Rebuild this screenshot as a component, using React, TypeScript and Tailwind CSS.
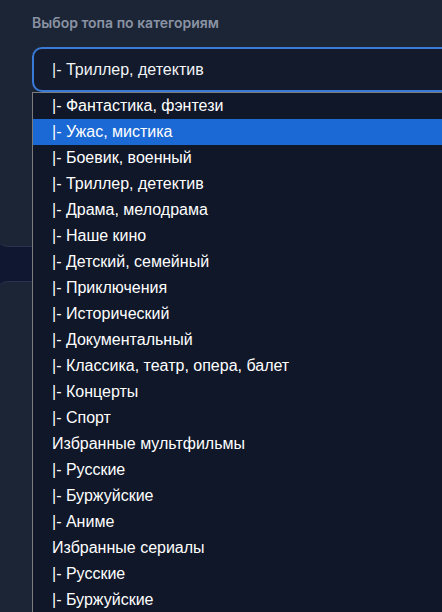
import React from "react";

const items: { label: string; child: boolean }[] = [
  { label: "Фантастика, фэнтези", child: true },
  { label: "Ужас, мистика", child: true },
  { label: "Боевик, военный", child: true },
  { label: "Триллер, детектив", child: true },
  { label: "Драма, мелодрама", child: true },
  { label: "Наше кино", child: true },
  { label: "Детский, семейный", child: true },
  { label: "Приключения", child: true },
  { label: "Исторический", child: true },
  { label: "Документальный", child: true },
  { label: "Классика, театр, опера, балет", child: true },
  { label: "Концерты", child: true },
  { label: "Спорт", child: true },
  { label: "Избранные мультфильмы", child: false },
  { label: "Русские", child: true },
  { label: "Буржуйские", child: true },
  { label: "Аниме", child: true },
  { label: "Избранные сериалы", child: false },
  { label: "Русские", child: true },
  { label: "Буржуйские", child: true },
];

export default function App() {
  const highlighted = 1;

  return (
    <div className="relative w-[442px] h-[612px] overflow-hidden bg-[#0f1830] flex flex-col">
      {/* top card */}
      <div className="h-[247px] -ml-1 bg-[#1c2536] rounded-b-xl border-b border-[#27344c] pl-9 pt-[15px] shrink-0">
        <div
          className="text-[14px] font-semibold text-[#8a93a3] leading-4"
          style={{ fontFamily: "Inter, 'Noto Sans', sans-serif" }}
        >
          Выбор топа по категориям
        </div>
        <div
          className="mt-[16px] -mr-6 h-[45px] rounded-[10px] border-2 border-[#3a7ad6] bg-[#121a2b] flex items-center pl-[18px] text-[16px] text-[#f1f3f6]"
          style={{ fontFamily: "'Liberation Sans', Arial, sans-serif" }}
        >
          |- Триллер, детектив
        </div>
      </div>

      {/* second card */}
      <div className="mt-[34px] -ml-1 flex-1 bg-[#1c2536] rounded-t-xl border-t border-[#27344c]" />

      {/* open dropdown list */}
      <div
        className="absolute left-8 top-[92px] -right-4 bottom-0 bg-[#0f1729] border-l border-t border-[#7b7b7b] flex flex-col text-[16px] text-white"
        style={{ fontFamily: "'Liberation Sans', Arial, sans-serif" }}
      >
        {items.map((it, i) => (
          <div
            key={i}
            className={`h-[26px] shrink-0 pl-[19px] flex items-center whitespace-nowrap ${
              i === highlighted ? "bg-[#1b69d4]" : ""
            }`}
          >
            {it.child ? "|- " : ""}
            {it.label}
          </div>
        ))}
      </div>
    </div>
  );
}
